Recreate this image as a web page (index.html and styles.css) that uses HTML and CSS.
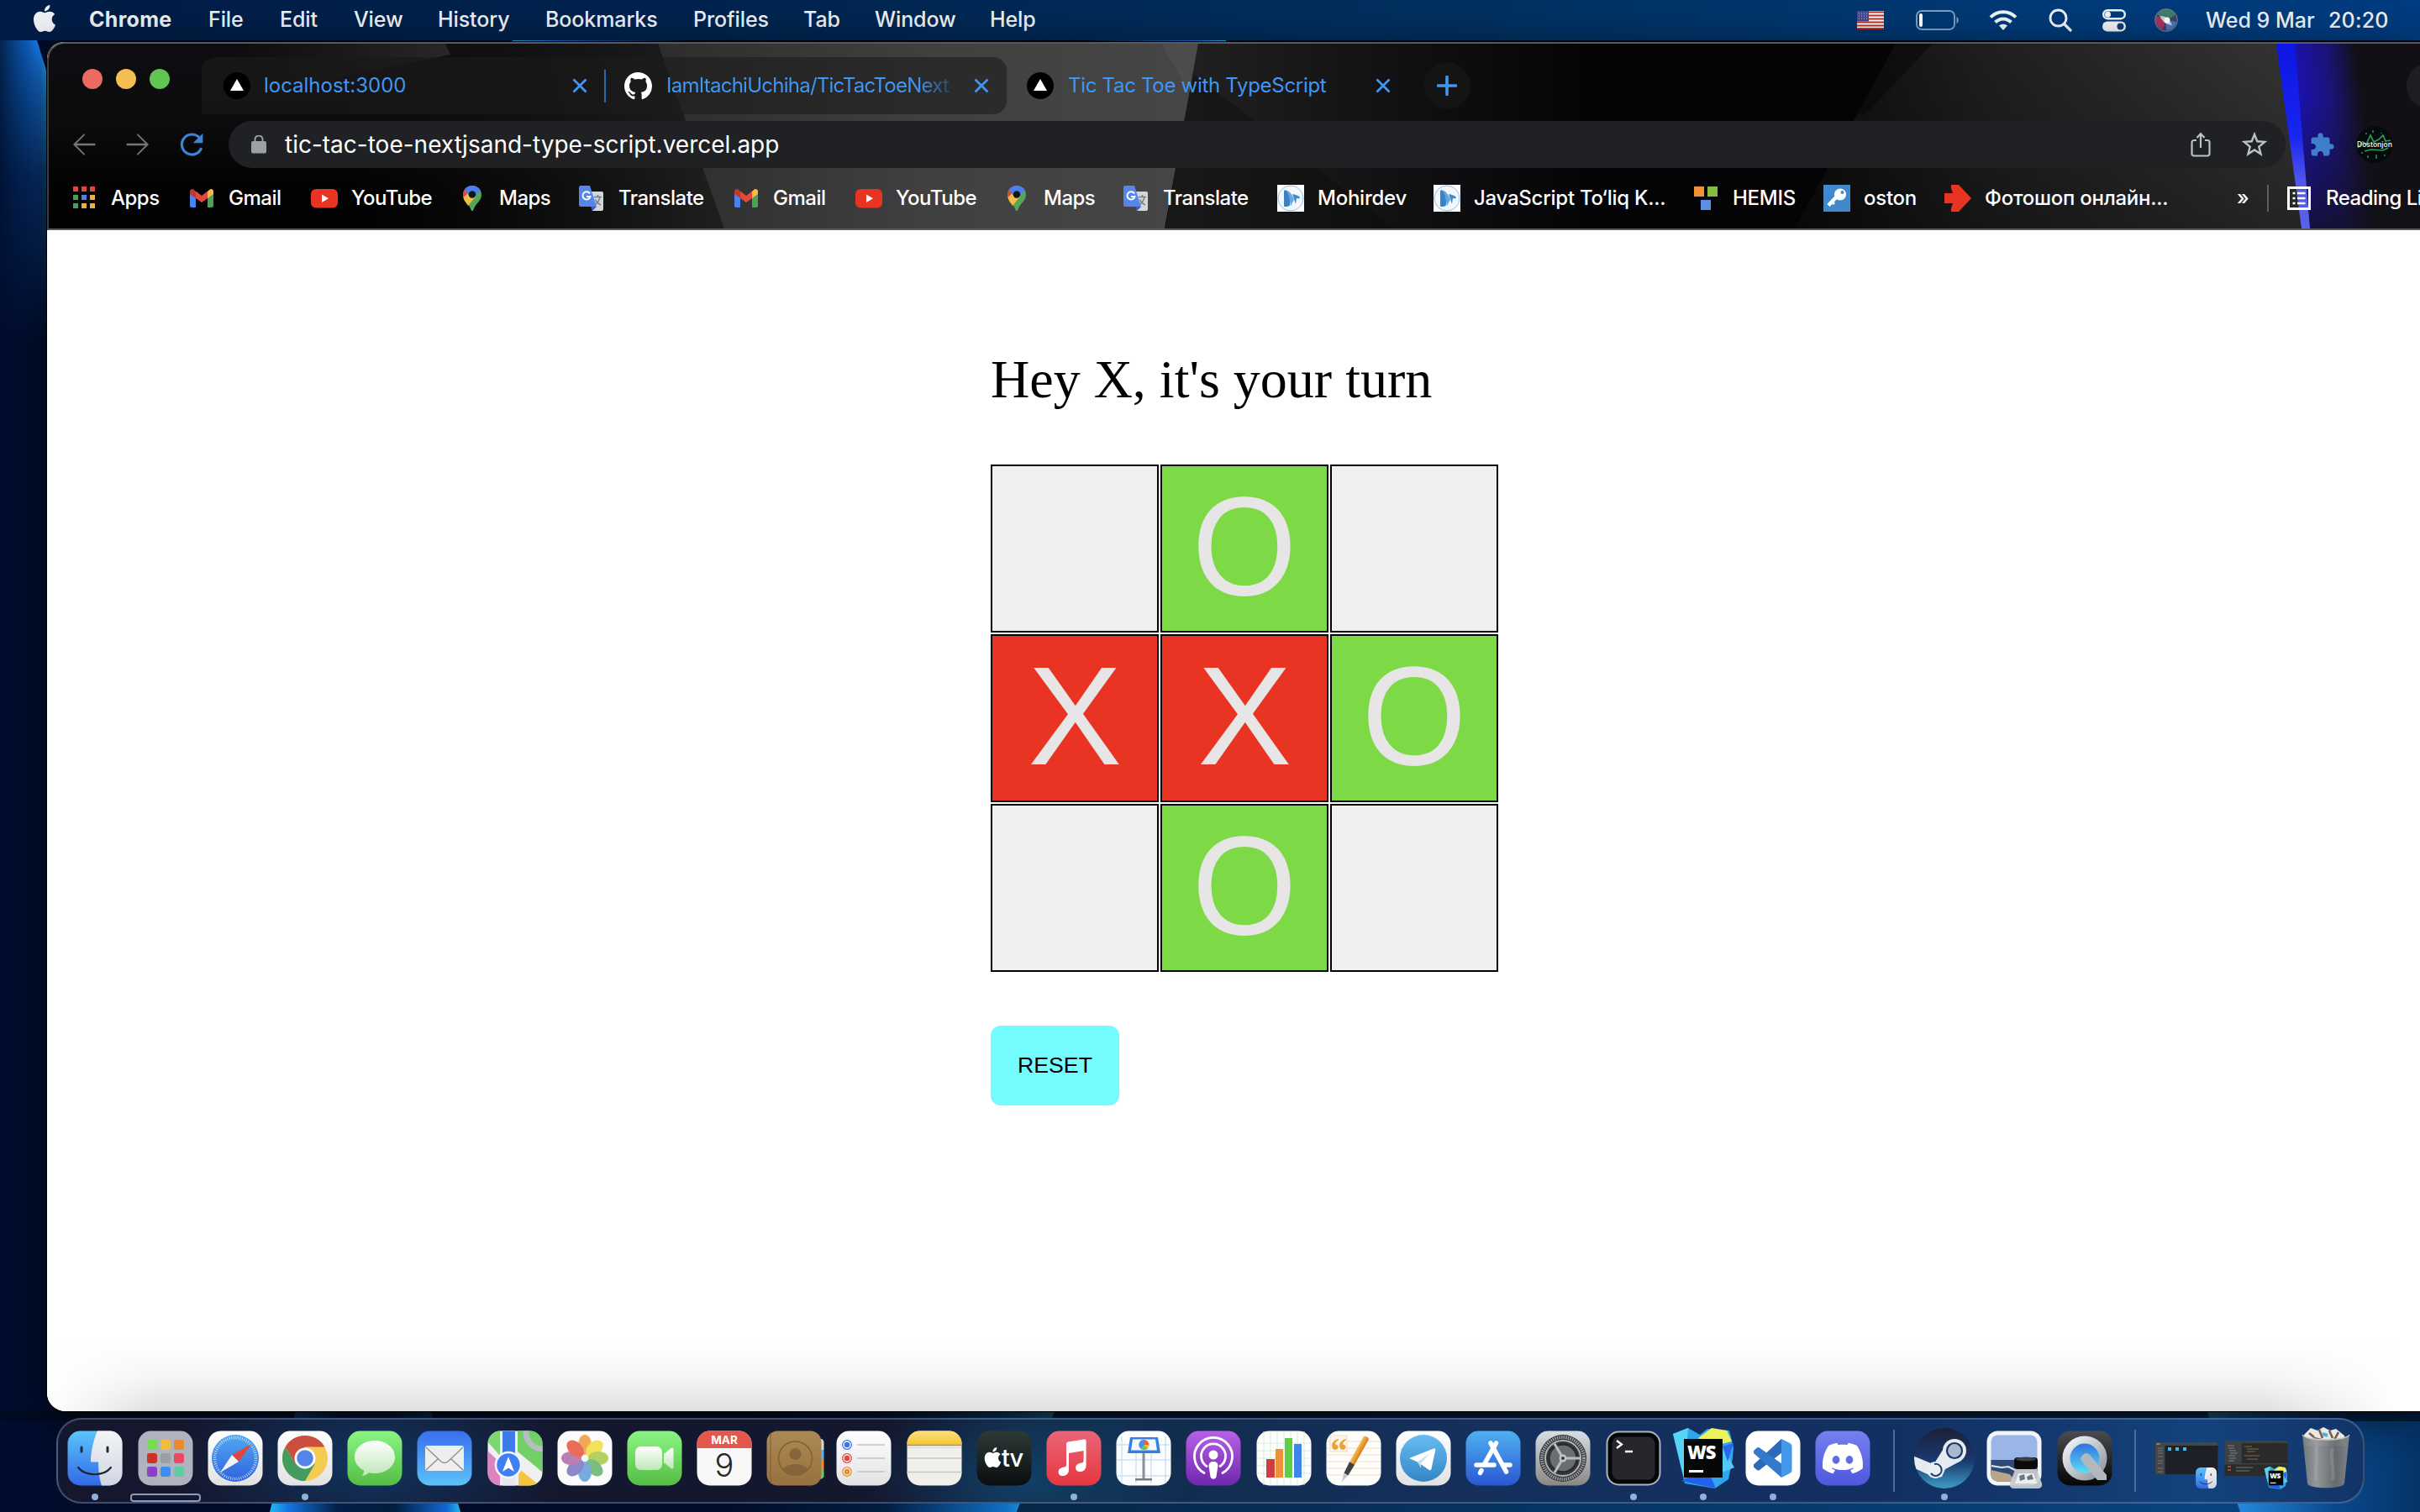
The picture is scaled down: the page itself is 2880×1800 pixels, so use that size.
FILE: index.html
```html
<!DOCTYPE html>
<html lang="en">
<head>
<meta charset="utf-8">
<title>Tic Tac Toe with TypeScript</title>
<link rel="stylesheet" href="styles.css">
</head>
<body>
<svg class="defs" width="0" height="0" aria-hidden="true">
  <defs>
    <linearGradient id="g-finder" x1="0" y1="0" x2="0" y2="1"><stop offset="0" stop-color="#5cc5fb"/><stop offset="1" stop-color="#3268e8"/></linearGradient>
    <linearGradient id="g-face" x1="0" y1="0" x2="0" y2="1"><stop offset="0" stop-color="#f4f4f6"/><stop offset="1" stop-color="#cfd6e2"/></linearGradient>
    <linearGradient id="g-white" x1="0" y1="0" x2="0" y2="1"><stop offset="0" stop-color="#ffffff"/><stop offset="1" stop-color="#e2e2e2"/></linearGradient>
    <linearGradient id="g-safari" x1="0" y1="0" x2="0" y2="1"><stop offset="0" stop-color="#52a9f2"/><stop offset="1" stop-color="#2f62dd"/></linearGradient>
    <linearGradient id="g-green" x1="0" y1="0" x2="0" y2="1"><stop offset="0" stop-color="#8af583"/><stop offset="1" stop-color="#55bd45"/></linearGradient>
    <linearGradient id="g-bubble" x1="0" y1="0" x2="0" y2="1"><stop offset="0" stop-color="#ffffff"/><stop offset="1" stop-color="#bfe6b8"/></linearGradient>
    <linearGradient id="g-mail" x1="0" y1="0" x2="0" y2="1"><stop offset="0" stop-color="#3a6eee"/><stop offset="1" stop-color="#5cc3fa"/></linearGradient>
    <linearGradient id="g-contacts" x1="0" y1="0" x2="0" y2="1"><stop offset="0" stop-color="#ab8a55"/><stop offset="1" stop-color="#99703f"/></linearGradient>
    <linearGradient id="g-notes" x1="0" y1="0" x2="0" y2="1"><stop offset="0" stop-color="#fbe183"/><stop offset="1" stop-color="#f6c62f"/></linearGradient>
    <linearGradient id="g-tv" x1="0" y1="0" x2="0" y2="1"><stop offset="0" stop-color="#2d3a37"/><stop offset="1" stop-color="#0b0d0e"/></linearGradient>
    <linearGradient id="g-music" x1="0" y1="0" x2="0" y2="1"><stop offset="0" stop-color="#eb6577"/><stop offset="1" stop-color="#e5373f"/></linearGradient>
    <linearGradient id="g-podcasts" x1="0" y1="0" x2="0" y2="1"><stop offset="0" stop-color="#b861e8"/><stop offset="1" stop-color="#6f27ad"/></linearGradient>
    <linearGradient id="g-store" x1="0" y1="0" x2="0" y2="1"><stop offset="0" stop-color="#4fb0f0"/><stop offset="1" stop-color="#2a57d4"/></linearGradient>
    <linearGradient id="g-telegram" x1="0" y1="0" x2="0" y2="1"><stop offset="0" stop-color="#66bdf2"/><stop offset="1" stop-color="#3585c6"/></linearGradient>
    <linearGradient id="g-settings" x1="0" y1="0" x2="0" y2="1"><stop offset="0" stop-color="#d5dfe6"/><stop offset="1" stop-color="#8b8783"/></linearGradient>
    <linearGradient id="g-steam" x1="0" y1="0" x2="0" y2="1"><stop offset="0" stop-color="#1c1f36"/><stop offset=".55" stop-color="#1a3a70"/><stop offset="1" stop-color="#3e9cc4"/></linearGradient>
    <linearGradient id="g-discord" x1="0" y1="0" x2="0" y2="1"><stop offset="0" stop-color="#7680ee"/><stop offset="1" stop-color="#4f57dd"/></linearGradient>
    <linearGradient id="g-qt" x1="0" y1="0" x2="0" y2="1"><stop offset="0" stop-color="#4a4c50"/><stop offset="1" stop-color="#050505"/></linearGradient>
    <linearGradient id="g-ring" x1="0" y1="0" x2="1" y2="1"><stop offset="0" stop-color="#f3f6fb"/><stop offset="1" stop-color="#8e949c"/></linearGradient>
    <linearGradient id="g-qtin" x1="0" y1="0" x2="0" y2="1"><stop offset="0" stop-color="#2966d8"/><stop offset="1" stop-color="#64e9fb"/></linearGradient>
    <linearGradient id="g-trash" x1="0" y1="0" x2="1" y2="0"><stop offset="0" stop-color="#75787b"/><stop offset=".3" stop-color="#989b9e"/><stop offset=".7" stop-color="#696c6f"/><stop offset="1" stop-color="#85888b"/></linearGradient>
    <linearGradient id="g-pen" x1="0" y1="0" x2="1" y2="0"><stop offset="0" stop-color="#f6bf52"/><stop offset="1" stop-color="#d87c1c"/></linearGradient>
    <clipPath id="squircle"><rect x="-32.5" y="-32.5" width="65" height="65" rx="15"/></clipPath>
  </defs>
  <symbol id="apple" viewBox="0 0 24 24"><path d="M12.152 6.896c-.948 0-2.415-1.078-3.96-1.04-2.04.027-3.91 1.183-4.961 3.014-2.117 3.675-.546 9.103 1.519 12.09 1.013 1.454 2.208 3.09 3.792 3.039 1.52-.065 2.09-.987 3.935-.987 1.831 0 2.35.987 3.96.948 1.637-.026 2.676-1.48 3.676-2.948 1.156-1.688 1.636-3.325 1.662-3.415-.039-.013-3.182-1.221-3.22-4.857-.026-3.04 2.48-4.494 2.597-4.559-1.429-2.09-3.623-2.324-4.39-2.376-2-.156-3.675 1.09-4.61 1.09zM15.53 3.83c.843-1.012 1.4-2.427 1.245-3.83-1.207.052-2.662.805-3.532 1.818-.78.896-1.454 2.338-1.273 3.714 1.338.104 2.715-.688 3.559-1.701"/></symbol>
  <symbol id="vercel" viewBox="0 0 32 32"><circle cx="16" cy="16" r="16" fill="#000"/><path d="M16 8l8 14H8z" fill="#fff"/></symbol>
  <symbol id="close" viewBox="0 0 20 20"><path d="M2.500 2.500l15 15M17.500 2.500l-15 15" stroke="#4096f4" stroke-width="2.800" fill="none"/></symbol>
  <symbol id="gmail" viewBox="0 0 32 32"><path d="M2 8v17a2 2 0 002 2h5V14z" fill="#4a83ee"/><path d="M30 8v17a2 2 0 01-2 2h-5V14z" fill="#4aa456"/><path d="M23 8v8l7-5V8c0-3-3-4-5-2z" fill="#f2bd42"/><path d="M2 8v3l7 5V8L7 6C5 4 2 5 2 8z" fill="#b93a2e"/><path d="M9 16V7.500l7 5.500 7-5.500V16l-7 5z" fill="#e2493c"/></symbol>
  <symbol id="youtube" viewBox="0 0 32 32"><rect y="5" width="32" height="22.500" rx="6" fill="#e93323"/><path d="M13 11.500l8 4.700-8 4.700z" fill="#fff"/></symbol>
  <symbol id="maps" viewBox="0 0 32 32"><path d="M16 1C9.500 1 5 6 5 12c0 7 7 10 9.500 17.500.5 2 2.500 2 3 0C20 22 27 19 27 12 27 6 22.500 1 16 1z" fill="#57a55a"/><path d="M7 5.500L16 12 7.500 20C6 18 5 15 5 12c0-2.500.7-4.700 2-6.500z" fill="#dc4a3d"/><path d="M5.500 15L12 9l8 5-9 11C9 21.500 6.500 19.500 5.500 15z" fill="#f3bf42"/><path d="M7 5.500C9 2.500 12 1 16 1c4.500 0 8 2.500 10 6l-12 9-7-10.500z" fill="#4b80ec"/><circle cx="16" cy="11.500" r="4.200" fill="#17151a"/></symbol>
  <symbol id="translate" viewBox="0 0 32 32"><path d="M13 8h15a2 2 0 012 2v19a2 2 0 01-2 2H17z" fill="#d4d7da"/><path d="M15 26h7l-5 5z" fill="#3a56c4"/><path d="M3 1h11l8 25H3a2 2 0 01-2-2V3a2 2 0 012-2z" fill="#5786ea"/><path d="M14 10.500A4.600 4.600 0 1014.500 14H10" fill="none" stroke="#fff" stroke-width="1.900"/><path d="M19 14.500h9M23.500 12v2.500M26 14.500c-.8 4-3 7-5.500 9M20.500 17.500c1 2.500 3.500 5 6.500 6.500" fill="none" stroke="#73808a" stroke-width="1.500"/></symbol>
  <symbol id="mohir" viewBox="0 0 32 32"><path fill="#fff" d="M0 0h32v32H0z"/><circle cx="16" cy="16" r="15" fill="#f3f8fd" stroke="#8dbbe2"/><path d="M8 8c0-2 2-2 3-1l4 4v13c0 2-7 3-7 1z" fill="#3a82c4"/><path d="M11 6.500c4 1 7 6 9 11l-4 8-2-12z" fill="#67a9df"/><path d="M18 11c5 1 8 2 9 4 0 2-2 1-4 1l-1 7z" fill="#3f8ccd"/></symbol>
  <symbol id="finder" viewBox="-38 -38 76 76"><g clip-path="url(#squircle)"><path d="M-33-33h66v66h-66z" fill="url(#g-finder)"/><path d="M3-33C-2-20-5-8-5 4.500h9C4 15 5 24 8 33h26v-66z" fill="url(#g-face)"/></g><path d="M-16-13v5M15-13v5" stroke="#1e2b3c" stroke-width="3" stroke-linecap="round"/><path d="M-20 11c9 11 30 11 39 0" fill="none" stroke="#1b2430" stroke-width="2.200" stroke-linecap="round"/></symbol>
  <symbol id="webstorm" viewBox="-38 -38 76 76"><path d="M-36-29l18-7 14 8 9-7 26 2 5 20-1 13-5 25-16 11-36-6z" fill="#2fa5ee"/><path d="M-36-29l18-7-5 60z" fill="#55d5f3"/><path d="M-26 27l30-16 11 25z" fill="#2261ee"/><path d="M15 20l22-9-14-25z" fill="#54c7f6"/><path d="M23-14l13-4-7 22z" fill="#2a67ef"/><path d="M-6-24l16-12 18 3 6 13-25 6z" fill="#edf35f"/><path d="M-23-23h46v46h-46z" fill="#050807"/><text x="-19" y="1" class="ws-mark" fill="#fff">WS</text><path d="M-17 14h17v3h-17z" fill="#fff"/></symbol>
</svg>

<div class="wallpaper" aria-hidden="true">
  <svg width="2880" height="1800" viewBox="0 0 2880 1800">
    <defs>
      <linearGradient id="w-left" x1="0" y1="0" x2="1" y2="0"><stop offset="0" stop-color="#03254e"/><stop offset=".55" stop-color="#0c5bb8"/><stop offset=".85" stop-color="#1b83f6"/><stop offset="1" stop-color="#26c8ea"/></linearGradient>
      <linearGradient id="w-fade" x1="0" y1="0" x2="0" y2="1"><stop offset="0" stop-color="#000d2e" stop-opacity="0"/><stop offset=".45" stop-color="#000d2e" stop-opacity=".7"/><stop offset="1" stop-color="#000d2e"/></linearGradient>
      <linearGradient id="w-mid" x1="0" y1="0" x2="1" y2="0"><stop offset="0" stop-color="#24b9f0"/><stop offset=".1" stop-color="#1273e0"/><stop offset=".35" stop-color="#022048"/><stop offset=".65" stop-color="#021d3d"/><stop offset=".93" stop-color="#1068d6"/><stop offset="1" stop-color="#26b8ee"/></linearGradient>
      <linearGradient id="w-low" x1="0" y1="0" x2="1" y2="0"><stop offset="0" stop-color="#010b28"/><stop offset=".5" stop-color="#021d40"/><stop offset=".85" stop-color="#0f6ec4"/><stop offset="1" stop-color="#34c2ee"/></linearGradient>
      <linearGradient id="w-right" x1="0" y1="0" x2="1" y2="0"><stop offset="0" stop-color="#052748"/><stop offset=".5" stop-color="#06396c"/><stop offset="1" stop-color="#0a4686"/></linearGradient>
      <linearGradient id="w-edge" x1="0" y1="0" x2="1" y2="0"><stop offset="0" stop-color="#3cd0ef"/><stop offset=".15" stop-color="#2488de"/><stop offset=".6" stop-color="#09488c"/><stop offset="1" stop-color="#053468"/></linearGradient>
      <linearGradient id="w-top" x1="0" y1="0" x2="1" y2="0"><stop offset="0" stop-color="#22b4f5"/><stop offset=".06" stop-color="#1670e0"/><stop offset=".25" stop-color="#000814"/><stop offset=".8" stop-color="#000814"/><stop offset=".96" stop-color="#1a78e4"/><stop offset="1" stop-color="#2cc0f0"/></linearGradient>
    </defs>
    <path fill="#000d2a" d="M0 0h2880v1800H0z"/>
    <path fill="url(#w-left)" d="M0 48h44l13 42v400H0z"/><path fill="url(#w-fade)" d="M0 48h57v360H0z"/><path fill="#000d2e" d="M0 408h57v1392H0z"/>
    <path fill="url(#w-mid)" d="M352 1678h160l36 122H321z"/>
    <path fill="url(#w-low)" d="M900 1678h356l-46 122H850z"/>
    <path fill="url(#w-right)" d="M1256 1678h1624v122H1210z"/>
    <path fill="url(#w-edge)" d="M2626 1678h254v122h-214z"/>
    <path fill="#000c1c" opacity=".65" d="M0 1678h2880v14H0z"/>
    <path fill="url(#w-top)" d="M610 48h849v2H610z"/>
  </svg>
</div>

<header class="menubar">
  <nav class="menus">
    <svg class="apple" width="32" height="32"><use href="#apple"/></svg>
    <b>Chrome</b><span>File</span><span>Edit</span><span>View</span><span>History</span><span>Bookmarks</span><span>Profiles</span><span>Tab</span><span>Window</span><span>Help</span>
  </nav>
  <div class="status">
    <svg width="32" height="22" viewBox="0 0 32 22"><path fill="#fff" d="M0 0h32v22H0z"/><path d="M0 1.500h32M0 5.500h32M0 9.500h32M0 13.500h32M0 17.500h32M0 21h32" stroke="#b8342f" stroke-width="2"/><path fill="#474a8c" d="M0 0h14v12.500H0z"/><path d="M2 3h11M2 6h11M2 9h11" stroke="#b9bbd9" stroke-width="1" stroke-dasharray="1 2"/></svg>
    <svg width="52" height="26" viewBox="0 0 52 26"><rect x="1" y="2" width="45" height="22" rx="6" fill="none" stroke="#7f9cc0" stroke-width="2"/><path d="M48.500 9c3 1 3 7 0 8z" fill="#7f9cc0"/><rect x="4" y="5" width="4" height="16" rx="2" fill="#fff"/></svg>
    <svg width="34" height="26" viewBox="0 0 34 26"><g fill="none" stroke="#f0f3f7" stroke-width="4"><path d="M2 9.500c8-8.500 22-8.500 30 0"/><path d="M7.500 15.500c5.500-5.500 13.500-5.500 19 0"/></g><path d="M17 25l-5-5.500c3-2.500 7-2.500 10 0z" fill="#f0f3f7"/></svg>
    <svg width="28" height="28" viewBox="0 0 28 28"><circle cx="11.500" cy="11.500" r="9.500" fill="none" stroke="#f0f3f7" stroke-width="2.800"/><path d="M18.500 18.500l7.500 7.500" stroke="#f0f3f7" stroke-width="3.200" stroke-linecap="round"/></svg>
    <svg width="28" height="28" viewBox="0 0 28 28"><rect x="1.200" y="2.200" width="25.600" height="10" rx="5" fill="none" stroke="#f0f3f7" stroke-width="2.400"/><circle cx="6.500" cy="7.200" r="3.500" fill="#f0f3f7"/><rect y="15.500" width="28" height="12" rx="6" fill="#f0f3f7"/><circle cx="21.500" cy="21.500" r="4" fill="#123c72"/></svg>
    <svg width="28" height="28" viewBox="0 0 28 28"><circle cx="14" cy="14" r="14" fill="#3b4568"/><path d="M3 7C8-1 20-1 25 7c-2 3-7 5-11 6z" fill="#3f7f68"/><path d="M2 9c-2 7 2 14 7 16l6-11z" fill="#a5355f"/><path d="M14 14l12 2c-1 6-6 10-12 10z" fill="#4a78c6"/><path d="M6 9c7 0 11 3 15 11-8-1-11-4-15-11z" fill="#fff" opacity=".7"/><circle cx="15" cy="14" r="3.500" fill="#fff"/><circle cx="14" cy="14" r="13.300" fill="none" stroke="#76809e"/></svg>
    <span class="date">Wed 9 Mar</span><span class="time">20:20</span>
  </div>
</header>

<main class="window">
  <div class="chrome">
    <svg class="theme" width="2822" height="220" viewBox="58 52 2822 220" aria-hidden="true">
      <defs>
        <linearGradient id="t-base" x1="0" y1="0" x2="0" y2="1"><stop offset="0" stop-color="#0e0d11"/><stop offset=".45" stop-color="#0b0a0c"/><stop offset=".8" stop-color="#020202"/></linearGradient>
        <linearGradient id="t-band" gradientUnits="userSpaceOnUse" x1="280" y1="0" x2="530" y2="0"><stop offset="0" stop-color="#222" stop-opacity="0"/><stop offset="1" stop-color="#272727"/></linearGradient>
        <linearGradient id="t-pre" gradientUnits="userSpaceOnUse" x1="420" y1="0" x2="870" y2="0"><stop offset="0" stop-color="#101011" stop-opacity="0"/><stop offset="1" stop-color="#202021"/></linearGradient>
        <linearGradient id="t-grey" x1="0" y1="0" x2="1" y2="0"><stop offset="0" stop-color="#2d2d2d"/><stop offset=".5" stop-color="#404040"/><stop offset="1" stop-color="#464646"/></linearGradient>
        <linearGradient id="t-dark" gradientUnits="userSpaceOnUse" x1="1387" y1="0" x2="1900" y2="0"><stop offset="0" stop-color="#222"/><stop offset=".4" stop-color="#151516"/><stop offset="1" stop-color="#040306"/></linearGradient>
        <linearGradient id="t-facet" gradientUnits="userSpaceOnUse" x1="1387" y1="0" x2="1660" y2="0"><stop offset="0" stop-color="#191919"/><stop offset="1" stop-color="#0e0e0f"/></linearGradient>
        <linearGradient id="t-grey2" gradientUnits="userSpaceOnUse" x1="2140" y1="0" x2="2720" y2="0"><stop offset="0" stop-color="#0c0c0d"/><stop offset=".4" stop-color="#1f1f1f"/><stop offset="1" stop-color="#333"/></linearGradient>
        <linearGradient id="t-shade" x1="0" y1="0" x2="0" y2="1"><stop offset="0" stop-color="#000" stop-opacity="0"/><stop offset="1" stop-color="#000" stop-opacity=".3"/></linearGradient>
        <linearGradient id="t-glow" gradientUnits="userSpaceOnUse" x1="2726" y1="0" x2="2796" y2="-8"><stop offset="0" stop-color="#1b12a8"/><stop offset=".5" stop-color="#1a1478"/><stop offset="1" stop-color="#121016"/></linearGradient>
        <linearGradient id="t-glow-fade" x1="0" y1="0" x2="0" y2="1"><stop offset=".3" stop-color="#121018" stop-opacity="0"/><stop offset="1" stop-color="#121018" stop-opacity=".75"/></linearGradient>
        <linearGradient id="t-line" x1="0" y1="0" x2="0" y2="1"><stop offset="0" stop-color="#0d16e4"/><stop offset=".5" stop-color="#1826ee"/><stop offset=".75" stop-color="#5058ea"/><stop offset="1" stop-color="#5a62ea"/></linearGradient>
      </defs>
      <path fill="url(#t-base)" d="M58 52h2822v220H58z"/>
      <path fill="url(#t-pre)" d="M420 52h450v220H420z"/>
      <path fill="url(#t-band)" d="M280 120V52h250l6 13-60 12z"/>
      <path fill="url(#t-grey)" d="M783 52h643l-40 220H862z"/>
      <path fill="#5a5a5a" opacity=".35" d="M1382 52h44l-5 68z"/>
      <path fill="url(#t-dark)" d="M1426 52h474v220h-513z"/>
      <path fill="url(#t-facet)" d="M1420 88l240 184h-273z"/>
      <path fill="#040306" d="M1899 52h369l-132 220h-237z"/>
      <path fill="url(#t-grey2)" d="M2256 52h490v220h-610z"/>
      <path fill="url(#t-shade)" d="M2256 52h490v220h-610z"/>
      <path fill="#060508" opacity=".5" d="M2256 52h44l-80 84h-14z"/>
      <path fill="url(#t-glow)" d="M2722 52h158v220h-136z"/>
      <path fill="url(#t-glow-fade)" d="M2722 52h158v220h-136z"/>
      <path fill="url(#t-line)" d="M2709 52h22l18 220h-10z"/>
      <circle cx="2892" cy="102" r="28" fill="#1e1d22"/>
    </svg>

    <div class="tabstrip">
      <div class="lights"><i class="red"></i><i class="amber"></i><i class="green"></i></div>
      <div class="tab tab-first"><svg width="32" height="32"><use href="#vercel"/></svg><span class="tab-title">localhost:3000</span><svg width="20" height="20"><use href="#close"/></svg></div>
      <div class="tab tab-second"><svg width="33" height="33" viewBox="0 0 16 16"><path fill="#fff" d="M8 0C3.580 0 0 3.580 0 8c0 3.540 2.290 6.530 5.470 7.590.4.070.55-.17.55-.38 0-.19-.01-.82-.01-1.490-2.010.37-2.530-.49-2.690-.94-.09-.23-.48-.94-.82-1.130-.28-.15-.68-.52-.01-.53.63-.01 1.080.58 1.230.82.72 1.210 1.870.87 2.330.66.07-.52.28-.87.51-1.070-1.780-.2-3.640-.89-3.640-3.950 0-.87.31-1.590.82-2.150-.08-.2-.36-1.020.08-2.120 0 0 .67-.21 2.200.82.64-.18 1.320-.27 2-.27s1.360.09 2 .27c1.530-1.040 2.200-.82 2.200-.82.44 1.100.16 1.920.08 2.120.51.56.82 1.270.82 2.150 0 3.070-1.870 3.750-3.650 3.950.29.25.54.73.54 1.480 0 1.070-.01 1.930-.01 2.200 0 .21.15.46.55.38A8.010 8.010 0 0016 8c0-4.420-3.580-8-8-8z"/></svg><span class="tab-title faded">IamItachiUchiha/TicTacToeNext</span><svg width="20" height="20"><use href="#close"/></svg></div>
      <div class="tab tab-active"><svg width="32" height="32"><use href="#vercel"/></svg><span class="tab-title">Tic Tac Toe with TypeScript</span><svg width="20" height="20"><use href="#close"/></svg></div>
      <div class="newtab"><svg width="24" height="24" viewBox="0 0 24 24"><path d="M12 1.500v21M1.500 12h21" stroke="#4096f4" stroke-width="3.600" stroke-linecap="round"/></svg></div>
    </div>

    <div class="toolbar">
      <svg width="40" height="40" viewBox="0 0 24 24"><path fill="#77777a" d="M20 11.300H6.600l6.100-6.200L12 4.300 4.200 12l7.800 7.700.7-.8-6.100-6.200H20z"/></svg>
      <svg width="40" height="40" viewBox="0 0 24 24"><path fill="#77777a" d="M4 11.300h13.400l-6.100-6.200.7-.8 7.800 7.700-7.800 7.700-.7-.8 6.100-6.200H4z"/></svg>
      <svg width="40" height="40" viewBox="0 0 24 24"><path fill="none" stroke="#3c84d4" stroke-width="1.900" d="M19 14.500A7.200 7.200 0 1117.600 7.200"/><path fill="#3c84d4" d="M20 4v7h-7z"/></svg>
      <div class="omnibox">
        <svg width="18" height="22" viewBox="0 0 18 22"><rect y="7" width="18" height="14.500" rx="2" fill="#9b9fa6"/><path d="M4.500 8V5a4.500 4.500 0 019 0v3" fill="none" stroke="#9b9fa6" stroke-width="2"/></svg>
        <span class="url">tic-tac-toe-nextjsand-type-script.vercel.app</span>
        <svg width="24" height="30" viewBox="0 0 24 30"><path d="M7 10H4a2.500 2.500 0 00-2.500 2.500V26A2.500 2.500 0 004 28.500h16a2.500 2.500 0 002.500-2.500V12.500A2.500 2.500 0 0020 10h-3M12 19V3M7.500 7L12 2.200 16.500 7" fill="none" stroke="#bdc1c6" stroke-width="2.200"/></svg>
        <svg width="32" height="32" viewBox="0 0 32 32"><path d="M16 4l3.300 8.300 8.900.6-6.900 5.700 2.200 8.700L16 22.500l-7.500 4.800 2.200-8.700-6.900-5.700 8.900-.6z" fill="none" stroke="#bdc1c6" stroke-width="2.400"/></svg>
      </div>
      <svg class="puzzle" width="31" height="31" viewBox="0 0 24 24"><path fill="#3f7ecb" d="M20.500 11H19V7c0-1.100-.9-2-2-2h-4V3.500C13 2.120 11.880 1 10.500 1S8 2.120 8 3.500V5H4c-1.100 0-1.990.9-1.990 2v3.800H3.500c1.490 0 2.700 1.210 2.700 2.700s-1.210 2.700-2.700 2.700H2V20c0 1.100.9 2 2 2h3.800v-1.500c0-1.490 1.210-2.700 2.700-2.700 1.490 0 2.700 1.210 2.700 2.700V22H17c1.100 0 2-.9 2-2v-4h1.500c1.380 0 2.500-1.120 2.500-2.500S21.880 11 20.500 11z"/></svg>
      <svg class="avatar" width="44" height="44" viewBox="0 0 44 44"><circle cx="22" cy="22" r="22" fill="#050a0a"/><path d="M2 26l6-7 4 3 5-11 4 8 6-3 5-5 3 7 6-1M10 30l8-2 14 1 6-3" stroke="#2f9a5a" stroke-width="1.700" fill="none"/><path d="M12 8v2M20 5v3M30 8v1M34 34v2M14 35v3M24 34v5M6 32h2" stroke="#2a8f74" stroke-width="1.500"/><text x="22" y="25" text-anchor="middle" fill="#dfe8e4" class="avatar-name">Dostonjon</text></svg>
    </div>

    <div class="bookmarks">
      <div class="marks">
        <a><svg width="32" height="32" viewBox="0 0 32 32"><path fill="#dc4a3d" d="M3 2h6v6H3zM13 2h6v6h-6zM23 2h6v6h-6z"/><path fill="#4c9b58" d="M3 12h6v6H3zM3 22h6v6H3z"/><path fill="#4a83ee" d="M13 12h6v6h-6z"/><path fill="#eab03e" d="M23 12h6v6h-6zM13 22h6v6h-6zM23 22h6v6h-6z"/></svg>Apps</a>
        <a><svg width="32" height="32"><use href="#gmail"/></svg>Gmail</a>
        <a><svg width="32" height="32"><use href="#youtube"/></svg>YouTube</a>
        <a><svg width="32" height="32"><use href="#maps"/></svg>Maps</a>
        <a><svg width="32" height="32"><use href="#translate"/></svg>Translate</a>
        <a><svg width="32" height="32"><use href="#gmail"/></svg>Gmail</a>
        <a><svg width="32" height="32"><use href="#youtube"/></svg>YouTube</a>
        <a><svg width="32" height="32"><use href="#maps"/></svg>Maps</a>
        <a><svg width="32" height="32"><use href="#translate"/></svg>Translate</a>
        <a class="wide"><svg width="32" height="32"><use href="#mohir"/></svg>Mohirdev</a>
        <a class="wide"><svg width="32" height="32"><use href="#mohir"/></svg>JavaScript To‘liq K...</a>
        <a class="wide"><svg width="32" height="32" viewBox="0 0 32 32"><path fill="#ee9434" d="M2 2h12v12H2z"/><path fill="#85bd3e" d="M18 2h12v12H18z"/><path fill="#5a90e4" d="M10 18h12v12H10z"/></svg>HEMIS</a>
        <a class="wide"><svg width="32" height="32" viewBox="0 0 32 32"><path fill="#3f89cc" d="M0 0h32v32H0z"/><circle cx="20" cy="11.500" r="7" fill="#fff"/><circle cx="22.500" cy="9" r="2" fill="#3f89cc"/><path d="M15 15L6 24.500" stroke="#fff" stroke-width="4.500"/><path d="M10 20l3 3" stroke="#fff" stroke-width="3"/></svg>oston</a>
        <a class="wide"><svg width="32" height="32" viewBox="0 0 32 32"><path fill="#e93323" d="M0 10h10L8 4V0h9l15 16-15 16H8v-4l2-6H0z"/></svg>Фотошоп онлайн...</a>
      </div>
      <span class="more">»</span>
      <span class="rule"></span>
      <a class="reading"><svg width="28" height="28" viewBox="0 0 28 28"><rect x="1.500" y="1.500" width="25" height="25" fill="none" stroke="#fff" stroke-width="3"/><path d="M6.500 8h3M6.500 14h3M6.500 20h3M12 8h9.500M12 14h9.500M12 20h9.500" stroke="#fff" stroke-width="2.600"/></svg>Reading List</a>
    </div>
  </div>

  <div class="page">
    <div class="game">
      <p class="turn">Hey X, it's your turn</p>
      <div class="board">
        <div class="cell"></div><div class="cell o"><span>O</span></div><div class="cell"></div>
        <div class="cell x"><span>X</span></div><div class="cell x"><span>X</span></div><div class="cell o"><span>O</span></div>
        <div class="cell"></div><div class="cell o"><span>O</span></div><div class="cell"></div>
      </div>
      <button class="reset">RESET</button>
    </div>
  </div>
</main>

<footer class="dock">
  <div class="app running"><svg><use href="#finder"/></svg></div>
  <div class="app bar"><svg viewBox="-38 -38 76 76"><rect x="-32.500" y="-32.500" width="65" height="65" rx="15" fill="#aeb3be"/><g><rect x="-22" y="-22" width="12" height="12" rx="3" fill="#74df55"/><rect x="-6" y="-22" width="12" height="12" rx="3" fill="#f3bd3c"/><rect x="10" y="-22" width="12" height="12" rx="3" fill="#e88a34"/><rect x="-22" y="-6" width="12" height="12" rx="3" fill="#cf3024"/><rect x="-6" y="-6" width="12" height="12" rx="3" fill="#9a9fa4"/><rect x="10" y="-6" width="12" height="12" rx="3" fill="#e94a62"/><rect x="-22" y="10" width="12" height="12" rx="3" fill="#8b3fc8"/><rect x="-6" y="10" width="12" height="12" rx="3" fill="#3f8df3"/><rect x="10" y="10" width="12" height="12" rx="3" fill="#63cba2"/></g></svg></div>
  <div class="app"><svg viewBox="-38 -38 76 76"><rect x="-32.500" y="-32.500" width="65" height="65" rx="15" fill="url(#g-white)"/><circle r="28" fill="url(#g-safari)"/><circle r="24.500" fill="none" stroke="#d6e8fb" stroke-width="3.500" stroke-dasharray=".8 1.760"/><path d="M19.500-17L4 4-4-4z" fill="#e3473b"/><path d="M-18 17L-4-4 4 4z" fill="#f4f4f4"/></svg></div>
  <div class="app running"><svg viewBox="-38 -38 76 76"><rect x="-32.500" y="-32.500" width="65" height="65" rx="15" fill="url(#g-white)"/><circle r="27" fill="#f5cb54"/><path d="M-23.400-13.500A27 27 0 0123.400-13.500H0L-11.700 6.800z" fill="#ca4f40"/><path d="M-23.400-13.500A27 27 0 000 27L11.700 6.800 0 0-11.700 6.800z" fill="#459b5d"/><circle r="12.500" fill="#fff"/><circle r="9.800" fill="#5583ea"/></svg></div>
  <div class="app"><svg viewBox="-38 -38 76 76"><rect x="-32.500" y="-32.500" width="65" height="65" rx="15" fill="url(#g-green)"/><path d="M0-21c13.500 0 24 8.500 24 19.500S13.500 18 0 18c-2.500 0-5-.3-7-.8-2 2-4.500 3.300-8.500 3.800 2-2 2.800-4.200 2.500-6.500C-20 11-24 5-24-1.500-24-12.500-13.500-21 0-21z" fill="url(#g-bubble)"/></svg></div>
  <div class="app"><svg viewBox="-38 -38 76 76"><rect x="-32.500" y="-32.500" width="65" height="65" rx="15" fill="url(#g-mail)"/><rect x="-23" y="-15" width="46" height="30" rx="3" fill="#eeeeef"/><path d="M-22-13L-4 4c2.500 2 5.500 2 8 0l18-17M-22 14L-8 1M22 14L8 1" fill="none" stroke="#8f9499" stroke-width="1.500"/></svg></div>
  <div class="app"><svg viewBox="-38 -38 76 76"><g clip-path="url(#squircle)"><path fill="#f0f0f0" d="M-33-33h66v66h-66z"/><path d="M-33-33h15v30l-15-17z" fill="#7cd672"/><path d="M3-33h30v50L3-8z" fill="#73cf68"/><path d="M-33-9L-18 5v28h-15z" fill="#dc83c3"/><path d="M4 12l26 21H4z" fill="#f2c63e"/><path d="M-15-33H0v66h-15z" fill="#e7e8ec"/><path d="M-15-33H0V-4h-15z" fill="#3d7bea"/><circle cx="33" cy="-31" r="20" fill="none" stroke="#b9bcc2" stroke-width="7"/></g><circle cx="-8" cy="8" r="15" fill="#3e80f2" stroke="#f4f5f8" stroke-width="2.600"/><path d="M-8-2l7 18-7-4.500-7 4.500z" fill="#fff"/></svg></div>
  <div class="app"><svg viewBox="-38 -38 76 76"><rect x="-32.500" y="-32.500" width="65" height="65" rx="15" fill="#fbfbfb"/><g opacity=".85"><ellipse cy="-16" rx="8" ry="12" fill="#f09a37"/><ellipse cy="-16" rx="8" ry="12" fill="#f0de3c" transform="rotate(45)"/><ellipse cy="-16" rx="8" ry="12" fill="#a8c848" transform="rotate(90)"/><ellipse cy="-16" rx="8" ry="12" fill="#63b36c" transform="rotate(135)"/><ellipse cy="-16" rx="8" ry="12" fill="#5f9fd8" transform="rotate(180)"/><ellipse cy="-16" rx="8" ry="12" fill="#7a74bf" transform="rotate(225)"/><ellipse cy="-16" rx="8" ry="12" fill="#b06aa8" transform="rotate(270)"/><ellipse cy="-16" rx="8" ry="12" fill="#e8553e" transform="rotate(315)"/></g></svg></div>
  <div class="app"><svg viewBox="-38 -38 76 76"><rect x="-32.500" y="-32.500" width="65" height="65" rx="15" fill="url(#g-green)"/><rect x="-23" y="-14" width="32" height="28" rx="6.500" fill="url(#g-bubble)"/><path d="M11-5l8.500-7c1.500-1 3-.5 3 1v22c0 1.500-1.500 2-3 1L11 5z" fill="url(#g-bubble)"/></svg></div>
  <div class="app"><svg viewBox="-38 -38 76 76"><g clip-path="url(#squircle)"><path fill="#f8f8f8" d="M-33-33h66v66h-66z"/><path fill="#e3574c" d="M-33-33h66v21h-66z"/></g><text y="-17" text-anchor="middle" fill="#fff" class="cal-month">MAR</text><text y="21.500" text-anchor="middle" fill="#262626" class="cal-day">9</text></svg></div>
  <div class="app"><svg viewBox="-38 -38 76 76"><path fill="#d5d5d5" d="M24-23h9c2 1 2.500 3 2.500 5v8H24z"/><path fill="#5eb2ea" d="M24-10h11.500V2H24z"/><path fill="#e88f35" d="M24 2h11.500v12H24z"/><path fill="#6cc960" d="M24 14h11.500v8c-1 2-3 3-5 3H24z"/><rect x="-32.500" y="-32.500" width="65" height="65" rx="13" fill="url(#g-contacts)"/><path d="M-28-30v60" stroke="#7d5c31" stroke-width="1"/><g fill="none" stroke="#82612f" stroke-width="1.500"><circle cx="1.500" cy="0" r="20"/></g><circle cx="1.500" cy="-5" r="7" fill="#87653a"/><path d="M-13 13c5-8 24-8 29 0-7 9-22 9-29 0z" fill="#87653a"/></svg></div>
  <div class="app"><svg viewBox="-38 -38 76 76"><rect x="-32.500" y="-32.500" width="65" height="65" rx="15" fill="url(#g-white)"/><g fill="none" stroke-width="1.200"><circle cx="-20" cy="-16" r="5.300" stroke="#3878ec"/><circle cx="-20" r="5.300" stroke="#de4b3f"/><circle cx="-20" cy="16" r="5.300" stroke="#e8912f"/></g><circle cx="-20" cy="-16" r="3.300" fill="#3878ec"/><circle cx="-20" r="3.300" fill="#de4b3f"/><circle cx="-20" cy="16" r="3.300" fill="#e8912f"/><path d="M-8-16h33M-8 0h33M-8 16h33" stroke="#c3c3c5" stroke-width="1.600"/></svg></div>
  <div class="app"><svg viewBox="-38 -38 76 76"><g clip-path="url(#squircle)"><path fill="#f0efea" d="M-33-33h66v66h-66z"/><path fill="url(#g-notes)" d="M-33-33h66v17h-66z"/><path d="M-33-15.500h66" stroke="#a79a72" stroke-width="1.300"/><path d="M-32-12.500h65" stroke="#bbb" stroke-dasharray="1 1.500"/><path d="M-33 0h66M-33 16.500h66" stroke="#c9c8c3" stroke-width="1.300"/></g></svg></div>
  <div class="app"><svg viewBox="-38 -38 76 76"><rect x="-32.500" y="-32.500" width="65" height="65" rx="15" fill="url(#g-tv)"/><use href="#apple" x="-25.500" y="-13" width="24" height="24" fill="#fff"/><text x="-3" y="10" fill="#fff" class="tv-mark">tv</text></svg></div>
  <div class="app running"><svg viewBox="-38 -38 76 76"><rect x="-32.500" y="-32.500" width="65" height="65" rx="15" fill="url(#g-music)"/><path d="M-9-17c0-1.500 1-2.300 2.300-2.600L12-22.500c1.600-.3 2.600.4 2.600 2V8.500c0 5-3.500 7.500-7.200 7.500-3 0-5.200-1.800-5.200-4.600 0-3.200 2.500-5 5.800-5.600 2.600-.5 3.600-1 3.600-3.400v-11.500L-6-6v19.500c0 5-3.500 7.500-7.200 7.500-3 0-5.200-1.800-5.200-4.600 0-3.200 2.500-5 5.800-5.600 2.600-.5 3.600-1 3.600-3.400z" fill="#fff"/></svg></div>
  <div class="app"><svg viewBox="-38 -38 76 76"><rect x="-32.500" y="-32.500" width="65" height="65" rx="15" fill="#fcfdfe"/><path d="M-32-16h64M-32 2h64M-32 21h64M-26-26v56M-9-26v56M9-26v56M26-26v56" stroke="#cfe2f3" stroke-width="1.500"/><path d="M-1.500-6h3v31h-3z" fill="#8a9098"/><path d="M-10 24h20v2.500h-20z" fill="#787c82"/><path d="M-16-25h33l3 19h-39z" fill="#2f82e4"/><path d="M-13-22.500h27l2 13h-31z" fill="#f4f7fb"/><circle cx=".5" cy="-16" r="6" fill="#e7643e"/><path d="M.5-16v-6a6 6 0 00-4 10.500z" fill="#4b8df0"/><path d="M.5-16l-4 4.500a6 6 0 008 0z" fill="#6cc656"/><path d="M.5-16l4 4.500a6 6 0 002-4.500z" fill="#f2c440"/></svg></div>
  <div class="app"><svg viewBox="-38 -38 76 76"><rect x="-32.500" y="-32.500" width="65" height="65" rx="15" fill="url(#g-podcasts)"/><g fill="none" stroke="#fff" stroke-width="2.800" stroke-linecap="round"><path d="M-11 17.500A22.500 22.500 0 1111 17.500"/><path d="M-8 9.500a14.500 14.500 0 1116 0"/></g><circle cy="-4" r="5.500" fill="#fff"/><path d="M-5.500 9c0-3 2-5 5.500-5s5.500 2 5.500 5l-2 13c-.7 3.500-6.300 3.500-7 0z" fill="#fff"/></svg></div>
  <div class="app"><svg viewBox="-38 -38 76 76"><rect x="-32.500" y="-32.500" width="65" height="65" rx="15" fill="#fdfefd"/><path d="M-32-18h64M-32-9h64M-32 0h64M-32 9h64M-32 18h64M-24-32v64M-16-32v64M-8-32v64M0-32v64M8-32v64M16-32v64M24-32v64" stroke="#d5eed5"/><path d="M-21 1h10v22h-10z" fill="#cd3d42"/><path d="M-10-11H-1v34h-9z" fill="#ea9236"/><path d="M1-24h9v47H1z" fill="#61cf46"/><path d="M12-17h9v40h-9z" fill="#3f86ea"/></svg></div>
  <div class="app"><svg viewBox="-38 -38 76 76"><rect x="-32.500" y="-32.500" width="65" height="65" rx="15" fill="#fdfdfb"/><path d="M-32-20h64M-32-12h64M-32-4h64M-32 4h64M-32 12h64M-32 20h64" stroke="#f6ddc0" stroke-width="1.200"/><path fill="#fdf6ea" stroke="#f3dcb8" d="M-28-27h20v19h-20z"/><path d="M-18-23c-5 1-8 4-8 8 0 3 2 5 4 5s3.500-1.500 3.500-3.500-1.500-3-3.500-3c0-2 1.500-4 4-5zM-9-23c-5 1-8 4-8 8 0 3 2 5 4 5s3.500-1.500 3.500-3.500-1.500-3-3.500-3c0-2 1.500-4 4-5z" fill="#eca13d"/><g transform="translate(-13.500 27) rotate(29)"><path d="M-3.500-58c0-3 7-3 7 0v34h-7z" fill="url(#g-pen)"/><path d="M-3.500-24h7l-.7 15h-5.600z" fill="#3f4144"/><path d="M-2.700-9h5.400L0 2z" fill="#c4c8cc"/></g></svg></div>
  <div class="app"><svg viewBox="-38 -38 76 76"><rect x="-32.500" y="-32.500" width="65" height="65" rx="15" fill="url(#g-white)"/><circle r="28" fill="url(#g-telegram)"/><path d="M-17 0l29-11.500c1.500-.5 2.500.3 2.200 2L9.500 12.500c-.5 2-1.600 2.300-3.200 1.300L-1 8.500-8 4z" fill="#fff"/><path d="M-7 4l15-10L-3 6v6z" fill="#c9e0f1"/></svg></div>
  <div class="app"><svg viewBox="-38 -38 76 76"><rect x="-32.500" y="-32.500" width="65" height="65" rx="15" fill="url(#g-store)"/><g stroke="#fff" stroke-width="5.500" stroke-linecap="round"><path d="M3.500-18l-13.500 24M-14 14.500l-1.500 3M-3-18L15.500 16M-20 8h21M12.500 8H20"/></g></svg></div>
  <div class="app"><svg viewBox="-38 -38 76 76"><rect x="-32.500" y="-32.500" width="65" height="65" rx="15" fill="url(#g-settings)"/><circle r="28" fill="#34363a"/><circle r="25" fill="none" stroke="#a2a5a8" stroke-width="4" stroke-dasharray="1.400 1.218"/><circle r="21" fill="none" stroke="#b1b3b5" stroke-width="2"/><circle r="16.500" fill="#6b6e71" stroke="#2b2d30" stroke-width="2.400"/><path d="M0 0h20M0 0l-10-17.300M0 0l-10 17.300" stroke="#b9bbbd" stroke-width="3"/><circle r="4.500" fill="#c2c4c6"/><circle r="2" fill="#3a3c40"/></svg></div>
  <div class="app running"><svg viewBox="-38 -38 76 76"><rect x="-31.500" y="-31.500" width="63" height="63" rx="14" fill="#050505" stroke="#a9b6c0" stroke-width="2"/><rect x="-25.500" y="-25.500" width="51" height="51" rx="8" fill="#26272a"/><path d="M-20-21l6 4.500-6 4.500M-10-8h9" fill="none" stroke="#fff" stroke-width="2.300"/></svg></div>
  <div class="app running"><svg><use href="#webstorm"/></svg></div>
  <div class="app running"><svg viewBox="-38 -38 76 76"><rect x="-32.500" y="-32.500" width="65" height="65" rx="15" fill="#fff"/><path d="M10-23L-23 7.500v3l4 3.500c1 .7 2.200.7 3 0L11-7z" fill="#2a6ab8"/><path d="M-16-12.500c-1-.7-2-.7-3 0l-4 3.500v3L10 23l1-16z" fill="#3379cc"/><path d="M10-23l10 5c1.500.8 2.500 2 2.500 4v28c0 2-1 3.200-2.500 4l-10 5z" fill="#4398ea"/></svg></div>
  <div class="app"><svg viewBox="-38 -38 76 76"><rect x="-32.500" y="-32.500" width="65" height="65" rx="15" fill="url(#g-discord)"/><path transform="translate(-24 -24) scale(2)" fill="#fff" d="M20.317 4.370a19.790 19.790 0 00-4.885-1.515.074.074 0 00-.079.037c-.211.375-.445.865-.608 1.250-1.845-.276-3.680-.276-5.487 0-.164-.393-.406-.874-.618-1.250a.077.077 0 00-.079-.037 19.740 19.740 0 00-4.885 1.515.070.070 0 00-.032.028C.533 9.046-.319 13.580.099 18.058a.082.082 0 00.031.056c2.053 1.508 4.041 2.423 5.993 3.029a.078.078 0 00.084-.028c.462-.630.873-1.295 1.226-1.994a.076.076 0 00-.042-.106c-.653-.248-1.274-.550-1.872-.892a.077.077 0 01-.008-.128c.126-.094.252-.192.372-.291a.074.074 0 01.078-.011c3.928 1.793 8.180 1.793 12.061 0a.074.074 0 01.079.010c.120.099.246.198.373.292a.077.077 0 01-.007.128 12.300 12.300 0 01-1.873.891.077.077 0 00-.041.107c.360.698.772 1.363 1.225 1.993a.076.076 0 00.084.029c1.961-.607 3.950-1.522 6.002-3.029a.077.077 0 00.031-.055c.500-5.177-.838-9.674-3.549-13.660a.061.061 0 00-.031-.029zM8.020 15.331c-1.183 0-2.157-1.086-2.157-2.419 0-1.333.956-2.419 2.157-2.419 1.211 0 2.176 1.095 2.157 2.419 0 1.333-.956 2.419-2.157 2.419zm7.975 0c-1.183 0-2.157-1.086-2.157-2.419 0-1.333.955-2.419 2.157-2.419 1.211 0 2.176 1.095 2.157 2.419 0 1.333-.946 2.419-2.157 2.419z"/></svg></div>
  <div class="divider"></div>
  <div class="app running"><svg viewBox="-38 -38 76 76"><clipPath id="disc"><circle r="36"/></clipPath><circle r="36" fill="url(#g-steam)"/><g clip-path="url(#disc)"><path d="M-40-4l24 10 4 0L0-13l22 4-2 12-19 10-4 9-8 2-9-5-20-9z" fill="#e6ebf1"/></g><circle cx="12" cy="-9" r="14" fill="#e6ebf1"/><circle cx="12" cy="-9" r="9" fill="#aab8cc" stroke="#173664" stroke-width="2.200"/><circle cx="-11" cy="14" r="10" fill="#e9eef4"/><path d="M-16 18a7 7 0 104-11" fill="none" stroke="#1b4379" stroke-width="2.200"/></svg></div>
  <div class="app"><svg viewBox="-38 -38 76 76"><rect x="-32.500" y="-32.500" width="65" height="65" rx="13" fill="#f3f4f5"/><rect x="-27.500" y="-27.500" width="55" height="55" rx="8" fill="#9ab6e8"/><path d="M-27.500 2h55v18a8 8 0 01-8 7.500h-39a8 8 0 01-8-7.500z" fill="#2f4a78"/><path d="M-27.500 14l22 5 8 8.500h-22a8 8 0 01-8-7.500z" fill="#b8a68a"/><path d="M-27 9l12 2 8-1 8 4" stroke="#dfe7ee" stroke-width="2" fill="none"/><path d="M2 11h24l7 19c1 4-2 6-5 6H0c-3 0-6-2-5-6z" fill="#c9cccf" opacity=".93"/><path d="M5 18h18l4 12H1z" fill="#edf0f0"/><path d="M6 21l6-2 1 6-6 2zM15 22l6-3 2 6-7 1z" fill="#6e777f"/><rect x="0" y="-1" width="28" height="14" rx="4" fill="#0b0b0c"/><ellipse cx="14" cy="1" rx="12" ry="2.600" fill="#3c3e40"/></svg></div>
  <div class="app"><svg viewBox="-38 -38 76 76"><rect x="-32.500" y="-32.500" width="65" height="65" rx="15" fill="url(#g-qt)"/><circle r="22" fill="url(#g-qtin)" stroke="url(#g-ring)" stroke-width="9"/><path d="M-1-5c2-2 5-1 7 1l20 24v6H15L-4 3c-2-3 1-6 3-8z" fill="#b3b8be"/></svg></div>
  <div class="divider"></div>
  <div class="app"><svg viewBox="-38 -38 76 76"><path fill="#1d2127" d="M-37.500-19h75v38h-75z"/><path fill="#44474a" d="M-37.500-19h12v38h-12zM-25.500-19h63v4h-63z"/><path d="M-34-12h6M-34-9h6M-34-6h6M-34-2h6M-34 3h6M-34 6h6M-34 12h6M-34 16h6" stroke="#777" stroke-width="1"/><path d="M-22-13h4v4h-4zM-13-13h4v4h-4zM-4-13h4v4h-4z" fill="#3fb6e8"/><path d="M-35.500-17h4" stroke="#d9803c" stroke-width="1.500"/><use href="#finder" x="9" y="9" width="29" height="29"/></svg></div>
  <div class="app"><svg viewBox="-38 -38 76 76"><path fill="#2b2b2b" d="M-37.500-21h75v42h-75z"/><path fill="#3d4144" d="M-37.500-21h75v3h-75zM-37.500-18h20v24h-20zM-37.500 6h75v1.500h-75z"/><path d="M-34-15h8M-33-12h7M-32-9h8M-31-6h9M-33-3h8M-32 0h8M-33 3h7" stroke="#7c8084"/><path d="M-14-14h9M-11-11h14M-11-8h10M-14-3h18M-11 1h13" stroke="#7d6b4a"/><path d="M-34 10h4M-34 14h4" stroke="#a34a3c" stroke-width="2"/><path d="M-24 11h20M-24 15h16" stroke="#777"/><use href="#webstorm" x="9" y="9" width="29" height="29"/></svg></div>
  <div class="app"><svg viewBox="-38 -38 76 76"><path d="M-26-28l8-8 8 3 7-4 8 4 7-2 10 8 2 12h-50z" fill="#e9e9e7"/><path d="M-20-30l6 5M-8-34l4 10M4-33l4 9M15-31l-5 9M-14-24l12 3" stroke="#7b5a48" stroke-width="2.600"/><path d="M-4-29l6 2" stroke="#4ab0dd" stroke-width="4"/><path d="M-28-28c4 8 52 8 56 0l-6 58c-1 7-43 7-44 0z" fill="url(#g-trash)" opacity=".96"/><path d="M-28-28c4 8 52 8 56 0" stroke="#c4c6c8" stroke-width="1.300" fill="none"/><path d="M-12-14c3 14-2 26 1 40M8-12c-4 14 3 22 0 38" stroke="#b9bbbd" stroke-width="4" opacity=".25" fill="none"/></svg></div>
</footer>
</body>
</html>
```

FILE: styles.css
```css
* { box-sizing: border-box; }

body {
  margin: 0;
  width: 2880px;
  height: 1800px;
  overflow: hidden;
  position: relative;
  display: flex;
  flex-direction: column;
  font-family: Inter, "Noto Sans", sans-serif;
}

svg { display: block; flex: none; }
.defs { position: absolute; }
.wallpaper { position: absolute; inset: 0; z-index: -1; }

/* Menu bar */
.menubar {
  height: 48px;
  flex: none;
  display: flex;
  justify-content: space-between;
  background: linear-gradient(90deg, #001c45, #01244f 30%, #00305f 60%, #003a78 85%, #003c80);
  color: #eef1f5;
  font-size: 25px;
  font-weight: 500;
  letter-spacing: -0.1px;
  line-height: 46px;
  white-space: nowrap;
}
.menus {
  display: grid;
  grid-template-columns: 69px 142px 85px 88px 100px 128px 176px 131px 85px 137px 80px;
  padding-left: 37px;
}
.menus b { font-weight: 700; letter-spacing: 0.3px; }
.apple { fill: #eceff3; margin-top: 6px; }
.status {
  display: grid;
  grid-template-columns: 70px 87px 71px 64px 62px 61px 146px 109px;
  align-items: center;
}
.date { letter-spacing: 0; }
.time { letter-spacing: 0.2px; }

/* Browser window */
.window {
  margin: 2px 0 0 56px;
  height: 1630px;
  flex: none;
  display: flex;
  flex-direction: column;
  border-radius: 20px 0 0 22px;
  overflow: hidden;
  background: #fff;
  box-shadow: 0 0 0 1px #000, 0 10px 50px rgba(0, 0, 0, .6);
}
.chrome {
  position: relative;
  height: 224px;
  flex: none;
  border: 2px solid #59585c;
  border-width: 2px 0 2px 2px;
  border-left-color: #3e3d40;
  border-top-left-radius: 20px;
  overflow: hidden;
  isolation: isolate;
}
.theme { position: absolute; left: 0; top: 0; z-index: -1; }

.tabstrip { display: flex; padding-top: 16px; height: 84px; }
.lights { display: flex; gap: 16px; padding: 14px 0 0 40px; width: 182px; flex: none; }
.lights i { width: 24px; height: 24px; border-radius: 50%; }
.red { background: #ec6b60; }
.amber { background: #f4bf50; }
.green { background: #61c455; }

.tab {
  height: 68px;
  display: flex;
  align-items: center;
  color: #4096f4;
  font-size: 24px;
  letter-spacing: -0.02px;
  white-space: nowrap;
  flex: none;
}
.tab-title { flex: 1; overflow: hidden; padding-bottom: 1px; }
.tab-first {
  width: 481px;
  padding: 0 21px 0 26px;
  gap: 16px;
  background: linear-gradient(#2b69ac, #2b69ac) right center / 2px 39px no-repeat, rgba(25, 25, 25, .75);
  border-radius: 16px 0 0 0;
}
.tab-second {
  width: 477px;
  padding: 0 20px 0 22px;
  gap: 17px;
  background: rgba(28, 28, 28, .6);
  border-radius: 0 16px 16px 0;
}
.faded {
  margin-right: 1px;
  letter-spacing: -0.75px;
  -webkit-mask-image: linear-gradient(90deg, #000 86%, transparent 101%);
  mask-image: linear-gradient(90deg, #000 86%, transparent 101%);
}
.tab-active { width: 482px; padding: 0 24px; gap: 17px; letter-spacing: -0.3px; }
.newtab {
  width: 56px;
  height: 56px;
  margin: 6px 0 0 14px;
  border-radius: 50%;
  background: #141415;
  display: grid;
  place-items: center;
}

.toolbar { display: flex; align-items: center; height: 56px; margin-top: 8px; padding-left: 22px; gap: 24px; }
.omnibox {
  width: 2448px;
  height: 56px;
  border-radius: 28px;
  background: #202124;
  display: flex;
  align-items: center;
  padding: 0 21px 0 27px;
  color: #fff;
  font-size: 28px;
}
.url { flex: 1; padding-left: 22px; letter-spacing: 0; }
.omnibox svg:nth-of-type(2) { margin-right: 36px; }
.puzzle { margin-left: 4px; }
.avatar { margin-left: 1px; }
.avatar-name { font: 600 8.500px Inter, sans-serif; }

.bookmarks {
  height: 71px;
  display: flex;
  align-items: center;
  color: #fff;
  font-size: 24px;
  font-weight: 500;
  letter-spacing: -0.5px;
  white-space: nowrap;
}
.marks {
  width: 2604px;
  flex: none;
  padding-left: 26px;
  display: grid;
  grid-template-columns: 140px 146px 176px 142px 184px 146px 176px 142px 184px 186px 308px 156px 144px 320px;
}
.bookmarks a { display: flex; align-items: center; gap: 16px; }
.bookmarks .wide { letter-spacing: -0.25px; }
.bookmarks .reading { gap: 18px; }
.more { width: 36px; flex: none; }
.rule { width: 2px; height: 32px; background: #5d5d60; flex: none; margin-right: 22px; }

/* Game page */
.page {
  flex: 1;
  background:
    linear-gradient(90deg, #fff, transparent 130px, transparent 2640px, #fff 2800px),
    linear-gradient(#fff calc(100% - 84px), #f5f5f5 calc(100% - 40px), #e0e0e0);
}
.game { width: 604px; margin-left: 1123px; padding-top: 141px; }
.turn {
  margin: 0;
  font: 64px/74px "Liberation Serif", serif;
  letter-spacing: 0;
  white-space: nowrap;
}
.board {
  margin-top: 64px;
  display: grid;
  grid-template-columns: repeat(3, 200px);
  grid-auto-rows: 200px;
  gap: 2px;
}
.cell {
  border: 2px solid #000;
  background: #efefef;
  color: #e7e5e6;
  font: 160px/196px "Liberation Sans", Arial, sans-serif;
  text-align: center;
}
/* Marks are stretched upwards from their baseline */
.cell span { display: inline-block; transform-origin: 50% 78.3%; }
.x span { transform: scale(1.05, 1.045); }
.o span { transform: scaleY(1.045); }
.x { background: #e93323; }
.o { background: #7dd945; }
.reset {
  display: block;
  margin-top: 64px;
  width: 153px;
  height: 95px;
  border: 0;
  border-radius: 12px;
  background: #73fbfd;
  color: #000;
  padding: 0;
  font: 26.670px "Liberation Sans", Arial, sans-serif;
}

/* Dock */
.dock {
  margin: 8px 0 0 67px;
  width: 2747px;
  height: 102px;
  flex: none;
  display: flex;
  padding: 8px 0 0 2.800px;
  border: 2px solid rgba(130, 150, 185, .42);
  border-radius: 30px;
  background:
    radial-gradient(ellipse 230px 120px at 370px 50px, #113460, transparent),
    radial-gradient(ellipse 190px 120px at 1150px 70px, #114066, transparent),
    linear-gradient(90deg, #15172f, #13182f 38%, #122c4e 46%, #14305a 60%, #123062 80%, #14427c 93%, #123468);
}
.app { width: 83.200px; flex: none; display: flex; flex-direction: column; align-items: center; gap: 4px; }
.app svg { width: 76px; height: 76px; overflow: visible; }
.running::after { content: ""; width: 8px; height: 8px; border-radius: 50%; background: #8fb0dc; }
.bar::after { content: ""; width: 80px; height: 8px; border-radius: 4px; border: 2px solid #8d9ab8; }
.divider { width: 2px; height: 74px; margin: 4px 18px 0 18px; background: #4a6b9c; flex: none; }

.ws-mark { font: 800 22px "Open Sans", sans-serif; letter-spacing: -1px; }
.cal-month { font: 700 13.500px Inter, sans-serif; }
.cal-day { font: 300 38px Inter, sans-serif; }
.tv-mark { font: 500 29px Inter, sans-serif; letter-spacing: -1px; }
```
